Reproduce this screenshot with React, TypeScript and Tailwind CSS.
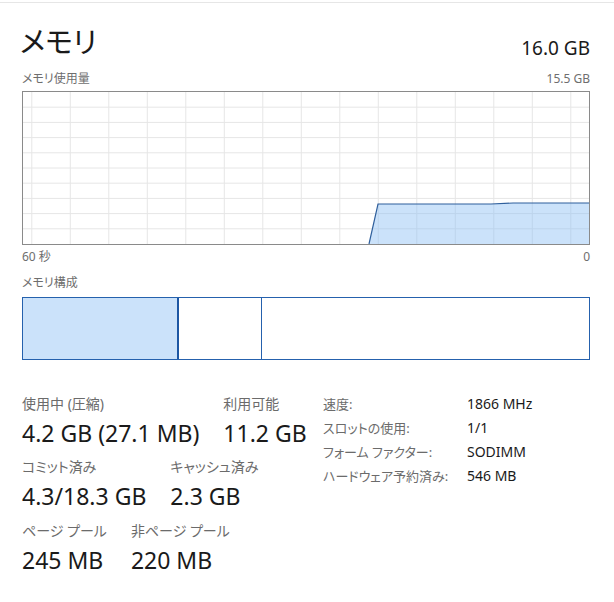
import React from 'react';

const FONT = "font-['Noto_Sans','Noto_Sans_CJK_JP',sans-serif] [font-feature-settings:'palt']";

const STATS_ROWS = [
  [
    { label: '使用中 (圧縮)', value: '4.2 GB (27.1 MB)' },
    { label: '利用可能', value: '11.2 GB' },
  ],
  [
    { label: 'コミット済み', value: '4.3/18.3 GB' },
    { label: 'キャッシュ済み', value: '2.3 GB' },
  ],
  [
    { label: 'ページ プール', value: '245 MB' },
    { label: '非ページ プール', value: '220 MB' },
  ],
];

const DETAILS = [
  { label: '速度:', value: '1866 MHz' },
  { label: 'スロットの使用:', value: '1/1' },
  { label: 'フォーム ファクター:', value: 'SODIMM' },
  { label: 'ハードウェア予約済み:', value: '546 MB' },
];

function UsageGraph() {
  const w = 566;
  const h = 152;
  const vLines = Array.from({ length: 15 }, (_, i) => 8.8 + i * 38.5);
  const hLines = Array.from({ length: 9 }, (_, i) => (i + 1) * 15.2);
  return (
    <div className="border border-[#8a8a8a] h-[154px]">
      <svg width={w} height={h} className="block">
        {vLines.map((x, i) => (
          <line key={'v' + i} x1={x} y1={0} x2={x} y2={h} stroke="#e6e6e6" strokeWidth={1} />
        ))}
        {hLines.map((y, i) => (
          <line key={'h' + i} x1={0} y1={y} x2={w} y2={y} stroke="#e6e6e6" strokeWidth={1} />
        ))}
        <polygon
          points={`346,${h} 355,112 468,112 490,111 ${w},111 ${w},${h}`}
          fill="rgba(140,190,245,0.45)"
        />
        <polyline
          points={`346,${h} 355,112 468,112 490,111 ${w},111`}
          fill="none"
          stroke="#2f5f9c"
          strokeWidth={1.2}
        />
      </svg>
    </div>
  );
}

export default function App() {
  return (
    <div className={`w-[614px] h-[602px] bg-white text-[#1a1a1a] overflow-hidden ${FONT}`}>
      <div className="h-[2px]" />
      <div className="border-t border-[#e6e6e6]" />

      <div className="pl-[22px] pr-[24px]">
        {/* Header */}
        <div className="mt-[21px] flex items-end justify-between h-[36px]">
          <h1 className="text-[29px] leading-[36px] font-normal -ml-[2px]">メモリ</h1>
          <div className="text-[19px] leading-[24px]">16.0 GB</div>
        </div>

        {/* Usage */}
        <div className="mt-[11px] flex justify-between text-[12px] leading-[16px] text-[#6e6e6e]">
          <span>メモリ使用量</span>
          <span>15.5 GB</span>
        </div>
        <div className="mt-[4px]">
          <UsageGraph />
        </div>
        <div className="mt-[4px] flex justify-between text-[12px] leading-[16px] text-[#6e6e6e]">
          <span>60 秒</span>
          <span>0</span>
        </div>

        {/* Composition */}
        <div className="mt-[10px] text-[12px] leading-[16px] text-[#6e6e6e]">メモリ構成</div>
        <div className="mt-[6px] h-[63px] flex border border-[#2561ad]">
          <div className="w-[156px] bg-[#cbe2fa] border-r-2 border-[#1c56a3]" />
          <div className="w-[83px] border-r border-[#2561ad]" />
          <div className="flex-1" />
        </div>

        {/* Stats */}
        <div className="mt-[32px] flex items-start">
          <div className="w-[301px] flex flex-col">
            {STATS_ROWS.map((row, ri) => (
              <div key={ri} className={`flex gap-[24px] ${ri === 0 ? '' : ri === 1 ? 'mt-[9px]' : 'mt-[10px]'}`}>
                {row.map(s => (
                  <div key={s.label} className="flex flex-col">
                    <span className="text-[14px] leading-[24px] text-[#6b6b6b] whitespace-nowrap">{s.label}</span>
                    <span className="mt-[4px] text-[23px] leading-[26px] whitespace-nowrap">{s.value}</span>
                  </div>
                ))}
              </div>
            ))}
          </div>
          <div className="grid grid-cols-[144px_1fr] content-start text-[13px] leading-[24px]">
            {DETAILS.map(d => (
              <React.Fragment key={d.label}>
                <span className="text-[#6b6b6b] whitespace-nowrap">{d.label}</span>
                <span className="text-[14px] text-[#1a1a1a]">{d.value}</span>
              </React.Fragment>
            ))}
          </div>
        </div>
      </div>
    </div>
  );
}
